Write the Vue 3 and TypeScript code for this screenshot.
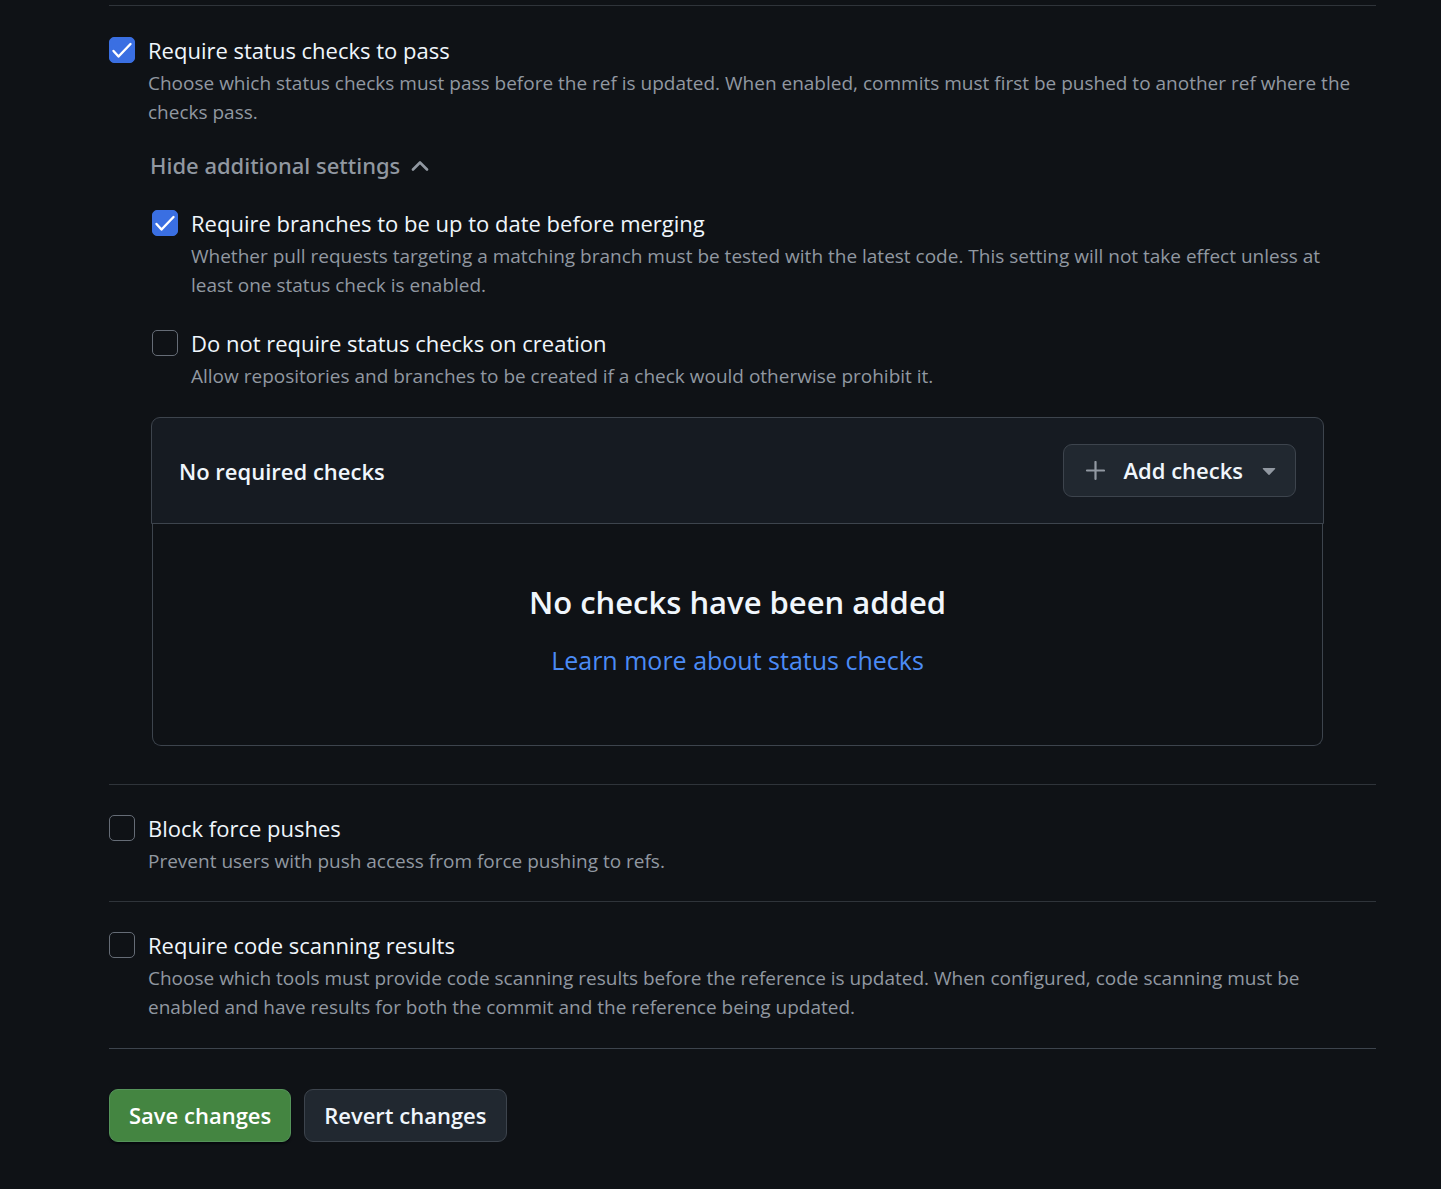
<script setup lang="ts">
import { reactive, ref } from 'vue'

interface Rule {
  id: string
  title: string
  description: string
  checked: boolean
}

const statusChecks = reactive<Rule>({
  id: 'status-checks',
  title: 'Require status checks to pass',
  description:
    'Choose which status checks must pass before the ref is updated. When enabled, commits must first be pushed to another ref where the checks pass.',
  checked: true,
})

const subRules = reactive<Rule[]>([
  {
    id: 'up-to-date',
    title: 'Require branches to be up to date before merging',
    description:
      'Whether pull requests targeting a matching branch must be tested with the latest code. This setting will not take effect unless at least one status check is enabled.',
    checked: true,
  },
  {
    id: 'skip-on-creation',
    title: 'Do not require status checks on creation',
    description: 'Allow repositories and branches to be created if a check would otherwise prohibit it.',
    checked: false,
  },
])

const otherRules = reactive<Rule[]>([
  {
    id: 'force-pushes',
    title: 'Block force pushes',
    description: 'Prevent users with push access from force pushing to refs.',
    checked: false,
  },
  {
    id: 'code-scanning',
    title: 'Require code scanning results',
    description:
      'Choose which tools must provide code scanning results before the reference is updated. When configured, code scanning must be enabled and have results for both the commit and the reference being updated.',
    checked: false,
  },
])

const expanded = ref(true)
</script>

<template>
  <main class="page">
    <section class="section section-expanded">
      <div class="rule">
        <input :id="statusChecks.id" v-model="statusChecks.checked" class="check" type="checkbox" />
        <div class="rule-text">
          <label class="title" :for="statusChecks.id">{{ statusChecks.title }}</label>
          <p class="description">{{ statusChecks.description }}</p>
        </div>
      </div>

      <div class="additional">
        <button class="toggle" type="button" :aria-expanded="expanded" @click="expanded = !expanded">
          <span>{{ expanded ? 'Hide' : 'Show' }} additional settings</span>
          <svg class="chevron" :class="{ closed: !expanded }" width="18" height="12" viewBox="0 0 18 12" aria-hidden="true">
            <path d="M2 10.500 9 3.500l7 7" fill="none" stroke="currentColor" stroke-width="2.600" stroke-linecap="round" stroke-linejoin="round" />
          </svg>
        </button>

        <div v-if="expanded" class="settings">
          <div v-for="rule in subRules" :key="rule.id" class="rule">
            <input :id="rule.id" v-model="rule.checked" class="check" type="checkbox" />
            <div class="rule-text">
              <label class="title" :for="rule.id">{{ rule.title }}</label>
              <p class="description">{{ rule.description }}</p>
            </div>
          </div>

          <div class="box">
            <header class="box-header">
              <h3 class="box-title">No required checks</h3>
              <button class="button add" type="button">
                <svg width="20" height="20" viewBox="0 0 20 20" aria-hidden="true">
                  <path d="M10.500 1v17M2 9.500h17" fill="none" stroke="currentColor" stroke-width="2.200" stroke-linecap="round" />
                </svg>
                <span>Add checks</span>
                <svg width="14" height="8" viewBox="0 0 14 8" aria-hidden="true">
                  <path d="M1.4 1h11.200c.6 0 .9.7.5 1.100L7.500 7.700a.7.7 0 0 1-1 0L.9 2.100C.5 1.700.8 1 1.400 1z" fill="currentColor" />
                </svg>
              </button>
            </header>
            <div class="box-body">
              <h2 class="blank-title">No checks have been added</h2>
              <a class="link" href="#">Learn more about status checks</a>
            </div>
          </div>
        </div>
      </div>
    </section>

    <section v-for="rule in otherRules" :key="rule.id" class="section">
      <div class="rule">
        <input :id="rule.id" v-model="rule.checked" class="check" type="checkbox" />
        <div class="rule-text">
          <label class="title" :for="rule.id">{{ rule.title }}</label>
          <p class="description">{{ rule.description }}</p>
        </div>
      </div>
    </section>

    <footer class="actions">
      <button class="button primary" type="button">Save changes</button>
      <button class="button" type="button">Revert changes</button>
    </footer>
  </main>
</template>

<style>
html,
body {
  background: #0f1216;
}
</style>

<style scoped>
.page {
  box-sizing: border-box;
  min-height: 100vh;
  padding: 5px 65px 46px 109px;
  background: #0f1216;
  color: #f0f6fc;
  font-family: 'Segoe UI', 'Open Sans', 'Noto Sans', sans-serif;
  font-size: 22px;
}

.section {
  padding: 28px 0 25px;
  border-top: 1px solid #2f343a;
}

.section:last-of-type {
  padding-bottom: 26px;
}

.section-expanded {
  padding: 29px 0 38px;
}

.rule {
  display: flex;
  align-items: flex-start;
  gap: 13px;
  padding-right: 16px;
}

.check {
  appearance: none;
  flex: none;
  width: 26px;
  height: 26px;
  margin: 2px 0 0;
  border: 1px solid #656c76;
  border-radius: 5px;
  background: transparent;
}

.check:checked {
  border-color: #3a6fe2;
  background: #3a6fe2 url("data:image/svg+xml,%3Csvg xmlns='http://www.w3.org/2000/svg' viewBox='0 0 24 24'%3E%3Cpath d='M3.5 13l5 5.500L20.500 6' fill='none' stroke='white' stroke-width='2.400' stroke-linecap='round' stroke-linejoin='round'/%3E%3C/svg%3E") center / 24px 24px no-repeat;
}

.rule-text {
  flex: 1;
  min-width: 0;
}

.title {
  display: block;
  width: fit-content;
  line-height: 30px;
}

.description {
  margin: 4px 0 0;
  color: #9198a1;
  font-size: 19px;
  line-height: 29px;
}

.additional {
  margin: 22px 12px 0 41px;
}

.toggle {
  display: flex;
  align-items: center;
  gap: 11px;
  padding: 0;
  border: 0;
  background: none;
  color: #9198a1;
  font-family: 'Segoe UI', 'Noto Sans', sans-serif;
  font-size: 22px;
  font-weight: 500;
  line-height: 32px;
}

.chevron.closed {
  transform: rotate(180deg);
}

.settings {
  display: flex;
  flex-direction: column;
  gap: 28px;
  margin: 27px 0 0 2px;
}

.box {
  margin: -2px 41px 0 0;
}

.box-header {
  display: flex;
  align-items: center;
  justify-content: space-between;
  margin: 0 -1px;
  padding: 26px 27px;
  border: 1px solid #3d444d;
  border-radius: 9px 9px 0 0;
  background: #161b22;
}

.box-title {
  margin: 0;
  font-size: 22px;
  font-weight: 600;
  line-height: 32px;
}

.box-body {
  display: flex;
  flex-direction: column;
  align-items: center;
  gap: 15px;
  padding: 54px 24px 66px;
  border: 1px solid #3d444d;
  border-top: 0;
  border-radius: 0 0 9px 9px;
}

.blank-title {
  margin: 0;
  font-size: 31px;
  font-weight: 600;
  line-height: 48px;
}

.link {
  color: #4b8bf5;
  font-size: 25px;
  line-height: 38px;
  text-decoration: none;
}

.button {
  display: flex;
  align-items: center;
  padding: 0 19px;
  border: 1px solid #3d444d;
  border-radius: 9px;
  background: #212830;
  color: #f0f6fc;
  font: inherit;
  font-weight: 600;
  line-height: 51px;
}

.add {
  gap: 19px;
  padding: 0 19px 0 21px;
}

.add svg {
  color: #9198a1;
}

.primary {
  border-color: #55935a;
  background: #448541;
  color: #ffffff;
  box-shadow: 0 2px 2px rgba(1, 4, 9, 0.6);
}

.actions {
  display: flex;
  gap: 13px;
  padding-top: 40px;
  border-top: 1px solid #3d444d;
}
</style>
